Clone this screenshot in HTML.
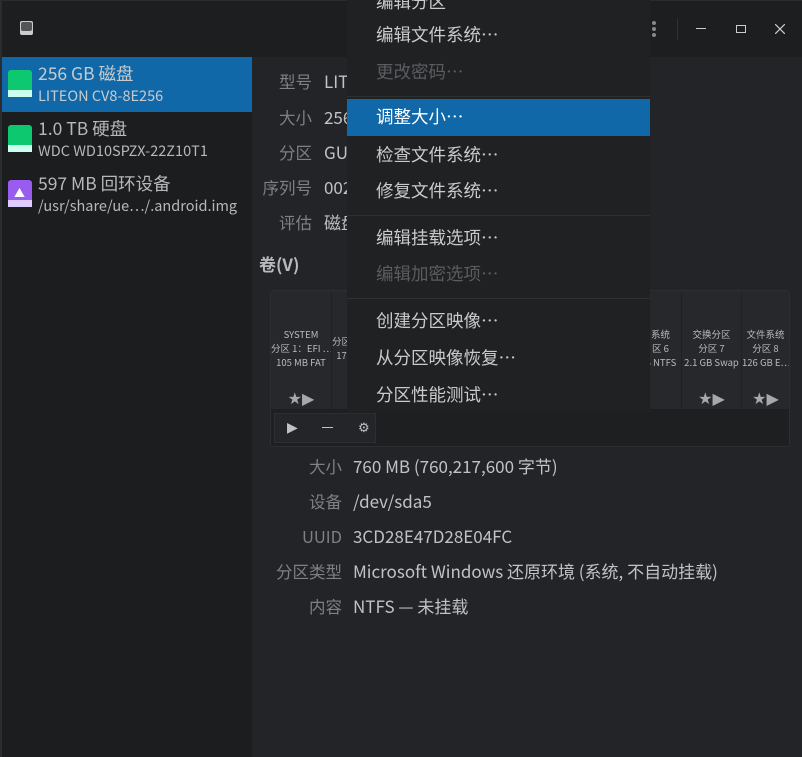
<!DOCTYPE html>
<html><head><meta charset="utf-8"><style>
*{margin:0;padding:0;box-sizing:border-box}
body{width:802px;height:757px;background:#2a2c2e;overflow:hidden;position:relative;font-family:"Noto Sans CJK SC","Liberation Sans",sans-serif;color:#c3c6c9;line-height:20px}
.a{position:absolute}
.title{left:2px;top:1px;width:800px;height:56px;background:#1c1e20}
.side{left:2px;top:57px;width:250px;height:700px;background:#1b1d1f}
.main{left:252px;top:57px;width:550px;height:700px;background:#222427}
.sel{left:2px;top:57px;width:250px;height:55px;background:#1168a8}
.dev{position:absolute;left:36px;color:#c8cbce;white-space:nowrap}
.dev .t{font-size:17.5px;line-height:22px}
.dev .s{font-size:14.5px;line-height:18px;margin-top:2px}
.ico{position:absolute;left:7px;width:24px;height:27px;border-radius:3px}
.lbl{position:absolute;font-size:16.5px;color:#7e8184;text-align:right;white-space:nowrap}
.val{position:absolute;font-size:17px;color:#c0c3c6;white-space:nowrap}
.menu{left:347px;top:0;width:303px;height:412px;background:#1f2123}
.mi{position:absolute;left:29px;font-size:17.5px;color:#c8cbce;white-space:nowrap;line-height:22px}
.dis{color:#5a5d60}
.sep{position:absolute;left:0;width:303px;height:1px;background:#2e3134}
.pc{position:absolute;top:291px;height:118px;border-right:1px solid #1f2123;background:#26282b;font-size:9.5px;text-align:center;color:#b8bbbe;line-height:14px;white-space:nowrap;overflow:hidden}
.star{position:absolute;bottom:3px;left:0;right:0;font-size:16px;color:#a6a9ac;text-align:center;font-family:"DejaVu Sans",sans-serif}
</style></head><body>
<div class="a title"></div>
<div class="a" style="left:20px;top:21px;width:13px;height:14px;background:#ccc;border-radius:2px"></div>
<div class="a" style="left:21px;top:22px;width:11px;height:9px;background:#555;border-radius:2px"></div>
<div class="a side"></div>
<div class="a main"></div>
<div class="a sel"></div>
<div class="ico" style="top:70px;left:8px;background:#0ec86f"></div><div class="a" style="left:8px;top:90px;width:24px;height:7px;background:#cfe"></div>
<div class="dev" style="top:63px;left:38px"><div class="t">256 GB 磁盘</div><div class="s">LITEON CV8-8E256</div></div>
<div class="ico" style="top:125px;left:8px;background:#0ec86f"></div><div class="a" style="left:8px;top:145px;width:24px;height:7px;background:#cfe"></div>
<div class="dev" style="top:118px;left:38px;color:#b6b9bc"><div class="t">1.0 TB 硬盘</div><div class="s">WDC WD10SPZX-22Z10T1</div></div>
<div class="ico" style="top:180px;left:8px;background:#9a5cf0"></div><div class="a" style="left:8px;top:200px;width:24px;height:7px;background:#dcf"></div>
<div class="a" style="left:14px;top:183px;color:#fff;font-size:11px">▲</div>
<div class="dev" style="top:173px;left:38px;color:#b6b9bc"><div class="t">597 MB 回环设备</div><div class="s">/usr/share/ue⋯/.android.img</div></div>

<div class="lbl" style="left:250px;width:62px;top:71px">型号</div><div class="val" style="left:324px;top:71px">LITEON</div>
<div class="lbl" style="left:250px;width:62px;top:107px">大小</div><div class="val" style="left:324px;top:107px">256 GB</div>
<div class="lbl" style="left:250px;width:62px;top:142px">分区</div><div class="val" style="left:324px;top:142px">GUID</div>
<div class="lbl" style="left:250px;width:62px;top:177px">序列号</div><div class="val" style="left:324px;top:177px">0020</div>
<div class="lbl" style="left:250px;width:62px;top:212px">评估</div><div class="val" style="left:324px;top:212px">磁盘</div>
<div class="a" style="left:259px;top:254px;font-size:17px;font-weight:bold;color:#b8bbbe">卷(V)</div>

<div class="a" style="left:270px;top:290px;width:520px;height:157px;background:#1d1f21;border:1px solid #2c2e31;border-radius:3px"></div>
<div class="pc" style="left:271px;width:61px"><div style="margin-top:36px">SYSTEM<br>分区 1：EFI ⋯<br>105 MB FAT</div><div class="star">★▶</div></div>
<div class="pc" style="left:332px;width:20px"><div style="margin-top:43px">分区<br>17</div></div>
<div class="pc" style="left:640px;width:42px"><div style="margin-top:36px">系统<br>区 6<br>B NTFS</div></div>
<div class="pc" style="left:682px;width:60px"><div style="margin-top:36px">交换分区<br>分区 7<br>2.1 GB Swap</div><div class="star">★▶</div></div>
<div class="pc" style="left:742px;width:47px;border:none"><div style="margin-top:36px">文件系统<br>分区 8<br>126 GB E⋯</div><div class="star">★▶</div></div>
<div class="a" style="left:274px;top:413px;width:102px;height:30px;background:#232528;border:1px solid #2c2e31"></div>
<div class="a" style="left:287px;top:418px;color:#c0c3c6;font-size:14px;font-family:'DejaVu Sans'">▶</div>
<div class="a" style="left:322px;top:427px;width:11px;height:1px;background:#c0c3c6"></div>
<div class="a" style="left:358px;top:419px;color:#c0c3c6;font-size:13px;font-family:'DejaVu Sans'">⚙</div>

<div class="lbl" style="left:250px;width:92px;top:456px">大小</div><div class="val" style="left:353px;top:456px">760 MB (760,217,600 字节)</div>
<div class="lbl" style="left:250px;width:92px;top:491px">设备</div><div class="val" style="left:353px;top:491px">/dev/sda5</div>
<div class="lbl" style="left:250px;width:92px;top:526px">UUID</div><div class="val" style="left:353px;top:526px">3CD28E47D28E04FC</div>
<div class="lbl" style="left:250px;width:92px;top:561px">分区类型</div><div class="val" style="left:353px;top:561px">Microsoft Windows 还原环境 (系统, 不自动挂载)</div>
<div class="lbl" style="left:250px;width:92px;top:596px">内容</div><div class="val" style="left:353px;top:596px">NTFS — 未挂载</div>

<div class="a menu">
<div class="mi" style="top:-9px">编辑分区</div>
<div class="mi" style="top:24px">编辑文件系统⋯</div>
<div class="mi dis" style="top:61px">更改密码⋯</div>
<div class="sep" style="top:96px"></div>
<div class="a" style="left:0;top:99px;width:303px;height:37px;background:#1168a8"></div>
<div class="mi" style="top:106px;color:#fff">调整大小⋯</div>
<div class="mi" style="top:144px">检查文件系统⋯</div>
<div class="mi" style="top:180px">修复文件系统⋯</div>
<div class="sep" style="top:215px"></div>
<div class="mi" style="top:227px">编辑挂载选项⋯</div>
<div class="mi dis" style="top:263px">编辑加密选项⋯</div>
<div class="sep" style="top:298px"></div>
<div class="mi" style="top:310px">创建分区映像⋯</div>
<div class="mi" style="top:347px">从分区映像恢复⋯</div>
<div class="mi" style="top:384px">分区性能测试⋯</div>
</div>

<div class="a" style="left:652px;top:21px;width:4px;height:4px;border-radius:2px;background:#888"></div>
<div class="a" style="left:652px;top:27px;width:4px;height:4px;border-radius:2px;background:#888"></div>
<div class="a" style="left:652px;top:33px;width:4px;height:4px;border-radius:2px;background:#888"></div>
<div class="a" style="left:677px;top:19px;width:1px;height:21px;background:#333"></div>
<div class="a" style="left:696px;top:28px;width:10px;height:1px;background:#ccc"></div>
<div class="a" style="left:736px;top:25px;width:10px;height:8px;border:1px solid #ccc"></div>
<svg class="a" style="left:775px;top:24px" width="10" height="10"><path d="M0 0L10 10M10 0L0 10" stroke="#ccc" stroke-width="1.2"/></svg>
</body></html>
